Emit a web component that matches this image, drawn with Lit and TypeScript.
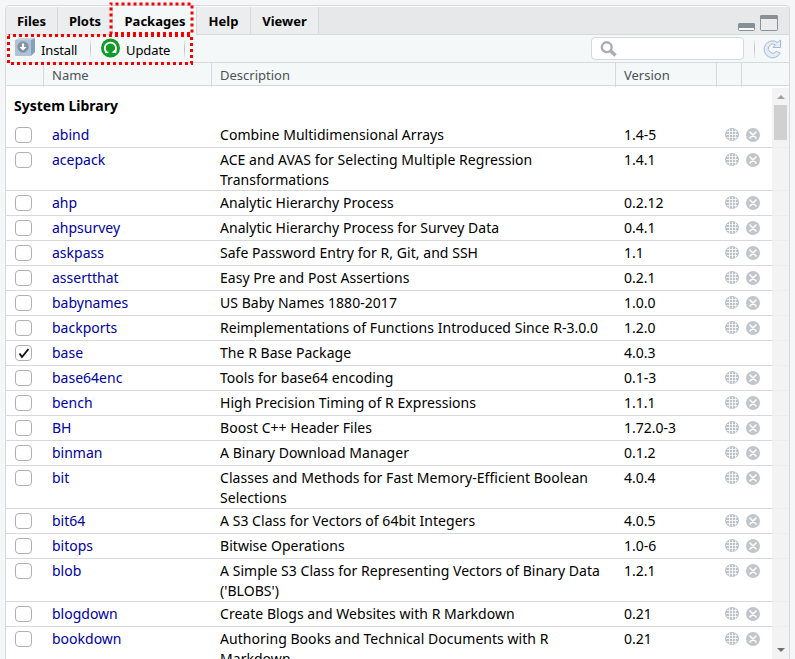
import { LitElement, html, css, svg } from "lit";
import { customElement } from "lit/decorators.js";

interface Pkg { name: string; desc: string; version: string; loaded: boolean; }

const p = (name: string, desc: string, version: string, loaded = false): Pkg => ({ name, desc, version, loaded });

const packages: Pkg[] = [
  p("abind", "Combine Multidimensional Arrays", "1.4-5"),
  p("acepack", "ACE and AVAS for Selecting Multiple Regression\nTransformations", "1.4.1"),
  p("ahp", "Analytic Hierarchy Process", "0.2.12"),
  p("ahpsurvey", "Analytic Hierarchy Process for Survey Data", "0.4.1"),
  p("askpass", "Safe Password Entry for R, Git, and SSH", "1.1"),
  p("assertthat", "Easy Pre and Post Assertions", "0.2.1"),
  p("babynames", "US Baby Names 1880-2017", "1.0.0"),
  p("backports", "Reimplementations of Functions Introduced Since R-3.0.0", "1.2.0"),
  p("base", "The R Base Package", "4.0.3", true),
  p("base64enc", "Tools for base64 encoding", "0.1-3"),
  p("bench", "High Precision Timing of R Expressions", "1.1.1"),
  p("BH", "Boost C++ Header Files", "1.72.0-3"),
  p("binman", "A Binary Download Manager", "0.1.2"),
  p("bit", "Classes and Methods for Fast Memory-Efficient Boolean\nSelections", "4.0.4"),
  p("bit64", "A S3 Class for Vectors of 64bit Integers", "4.0.5"),
  p("bitops", "Bitwise Operations", "1.0-6"),
  p("blob", "A Simple S3 Class for Representing Vectors of Binary Data\n('BLOBS')", "1.2.1"),
  p("blogdown", "Create Blogs and Websites with R Markdown", "0.21"),
  p("bookdown", "Authoring Books and Technical Documents with R\nMarkdown", "0.21"),
];

const globe = html`<svg width="14" height="14" viewBox="0 0 14 14">
  <ellipse cx="7" cy="6.500" rx="7" ry="6.500" fill="#bcc3c7"/>
  <path d="M2 3.500H12M1 6.500H13M2 9.500H12M4.500 1V12M7.500 1V12.500M10.500 1.500V11.500" stroke="#fff" fill="none" opacity=".75"/></svg>`;
const remove = html`<svg width="14" height="14" viewBox="0 0 14 14">
  <circle cx="7" cy="7" r="7" fill="#c0c6ca"/>
  <path d="M4 4L10 10M10 4L4 10" stroke="#fff" stroke-width="1.6" stroke-linecap="round"/></svg>`;
const check = html`<svg width="15" height="14" viewBox="0 0 15 14">
  <path d="M3.500 7.500L6 11L12.500 3" stroke="#111" stroke-width="1.900" fill="none"/></svg>`;

const frame = (x: number, y: number, w: number, h: number) =>
  svg`<rect x=${x} y=${y} width=${w} height=${h} fill="none" stroke="#f60000" stroke-width="3" stroke-dasharray="3 3" stroke-dashoffset="1.500"/>`;

@customElement("app-root")
export class AppRoot extends LitElement {
  static styles = css`
    :host { display: block; position: relative; height: 659px; overflow: hidden; background: #f5f6f8; box-sizing: border-box; padding: 5px 5px 0; font: 14px/20px "Noto Sans", "Open Sans", sans-serif; color: #000; }
    * { box-sizing: border-box; }
    svg { display: block; flex: none; }
    .panel { height: 670px; border: 1px solid #d6dadc; border-radius: 4px 4px 0 0; background: #fff; padding-top: 1px; }
    .tabs { display: flex; height: 28px; background: #e6e8e9; border-bottom: 1px solid #d6dadc; }
    .tab { height: 27px; background: #ebedee; border-right: 1px solid #d6dadc; font: bold 13px/28px "Noto Sans", sans-serif; text-align: center; white-space: nowrap; }
    .tab.on { background: #f4f8f9; height: 28px; padding-left: 1px; }
    .files { width: 52px; } .plots { width: 55px; } .packages { width: 84px; } .help { width: 54px; } .viewer { width: 68px; }
    .win { margin-left: auto; padding: 8px 10px 0 0; }
    .bar { display: flex; height: 28px; background: #f4f8f9; border-bottom: 1px solid #d6dadc; align-items: center; font-size: 13px; padding-left: 9px; }
    .cube { margin-top: -3px; }
    .install { width: 55px; padding: 3px 0 0 6px; letter-spacing: -.15px; }
    .arrow { margin: 0 0 1px 10px; }
    .update { width: 63px; padding: 3px 0 0 5px; letter-spacing: -.1px; }
    .sep { width: 1px; height: 18px; background: linear-gradient(#e9edef, #bcc2c5, #e9edef); }
    .search { width: 153px; height: 23px; margin: 0 10px 0 auto; border: 1px solid #d6dadc; border-radius: 4px; background: #fff; padding: 3px 8px; }
    .refresh { margin: 0 7px 0 8px; }
    .head { display: grid; grid-template-columns: 38px 168px 404px 101px 25px 1fr; height: 23px; background: #f4f8f9; border-bottom: 1px solid #d6dadc; color: #4c5256; font-size: 13px; line-height: 24px; }
    .head span { border-right: 1px solid #d6dadc; padding-left: 8px; }
    .head span:last-child { border: 0; }
    .body { position: relative; height: 573px; overflow: hidden; }
    .list { width: 782px; padding-top: 8px; }
    .title { height: 29px; padding-left: 8px; line-height: 24px; font-weight: bold; }
    .row { display: grid; grid-template-columns: 46px 168px 404px 101px 21px 42px; min-height: 25px; padding-top: 2px; border-bottom: 1px solid #d6d8da; align-items: start; }
    .name { color: #0000a0; }
    .desc { white-space: pre; letter-spacing: .04px; }
    .box { width: 17px; height: 16px; margin: 2px 0 0 9px; border: 1px solid #aeb0b2; border-radius: 4px; background: #fff; }
    .ico { padding-top: 3px; }
    .scroll { position: absolute; right: 0; top: 2px; width: 17px; height: 571px; background: rgba(241,241,241,.85); display: flex; flex-direction: column; align-items: center; }
    .up { margin-top: 7px; }
    .thumb { width: 13px; height: 35px; background: #d0d0d0; margin-top: 6px; }
    .down { margin-top: auto; margin-bottom: 7px; }
    .mark { position: absolute; left: 0; top: 0; }
  `;

  render() {
    return html`
      <div class="panel">
        <div class="tabs">
          <div class="tab files">Files</div><div class="tab plots">Plots</div><div class="tab on packages">Packages</div>
          <div class="tab help">Help</div><div class="tab viewer">Viewer</div>
          <div class="win"><svg width="41" height="18" viewBox="0 0 41 18" fill="none">
            <rect x=".500" y="9.500" width="16" height="6" rx="1" fill="#f8f9f9" stroke="#879096"/><path d="M1 8h15l1 1v4H0V9z" fill="#879096"/>
            <rect x="22.500" y=".500" width="17" height="15" rx="1" stroke="#879096" fill="#e9ebec"/><path d="M23 0h16l1 1v3H22V1z" fill="#879096"/></svg></div>
        </div>
        <div class="bar">
          <svg class="cube" width="20" height="18" viewBox="0 0 20 18"><path d="M0 2L4 0H20L16 2V18H1L0 17Z" fill="#c3d3e0"/><path d="M0 2H16V18H1L0 17Z" fill="#afc3d5"/><path d="M16 2L20 0V14L16 18Z" fill="#86a0b8"/><circle cx="8" cy="9" r="5.700" fill="#8292a4"/><path d="M6.900 5.500h2.200v3.500h2.400L8 12.500L4.500 9h2.400z" fill="#fff"/></svg>
          <span class="install">Install</span><i class="sep"></i>
          <svg class="arrow" width="20" height="20" viewBox="0 0 20 20"><circle cx="9.500" cy="10" r="9.500" fill="#109b2a"/><path d="M5.500 14.200A5.600 5.600 0 1 1 13.900 13.500" fill="none" stroke="#fff" stroke-width="1.800"/><path d="M10.500 14.500L15.300 15.200L15.500 10.500Z" fill="#fff"/><path d="M4 14.400h3.500" stroke="#fff" stroke-width="1.500"/></svg>
          <span class="update">Update</span><i class="sep"></i>
          <div class="search"><svg width="18" height="17" viewBox="0 0 18 17"><circle cx="6.700" cy="6.200" r="4.900" fill="none" stroke="#a7aeb2" stroke-width="2.400"/><path d="M10.500 9.800L15.500 14.500" stroke="#a7aeb2" stroke-width="3.400"/></svg></div>
          <i class="sep"></i>
          <svg class="refresh" width="19" height="20" viewBox="0 0 19 20"><path d="M14.500 3.400L17.500 1V8.500H10L12.300 5.800A4.500 4.500 0 1 0 13.300 12.400L17.300 14A8.500 8.500 0 1 1 14.500 3.400Z" fill="#e3edf8" stroke="#a9b9d0" stroke-linejoin="round"/></svg>
        </div>
        <div class="head"><span></span><span>Name</span><span>Description</span><span>Version</span><span></span><span></span></div>
        <div class="body">
          <div class="list"><div class="title">System Library</div>
            ${packages.map((k) => html`<div class="row"><span class="box">${k.loaded ? check : ""}</span><span class="name">${k.name}</span><span class="desc">${k.desc}</span><span>${k.version}</span>
            <span class="ico">${k.loaded ? "" : globe}</span><span class="ico">${k.loaded ? "" : remove}</span></div>`)}
          </div>
          <div class="scroll"><svg class="up" width="8" height="4" viewBox="0 0 8 4"><path d="M0 4L4 0L8 4Z" fill="#a3a3a3"/></svg><div class="thumb"></div>
            <svg class="down" width="8" height="4" viewBox="0 0 8 4"><path d="M0 0H8L4 4Z" fill="#707070"/></svg></div>
        </div>
      </div>
      <svg class="mark" width="200" height="70" viewBox="0 0 200 70">${frame(111, 4, 81, 29.5)}${frame(8.5, 35.5, 183, 28)}</svg>`;
  }
}
